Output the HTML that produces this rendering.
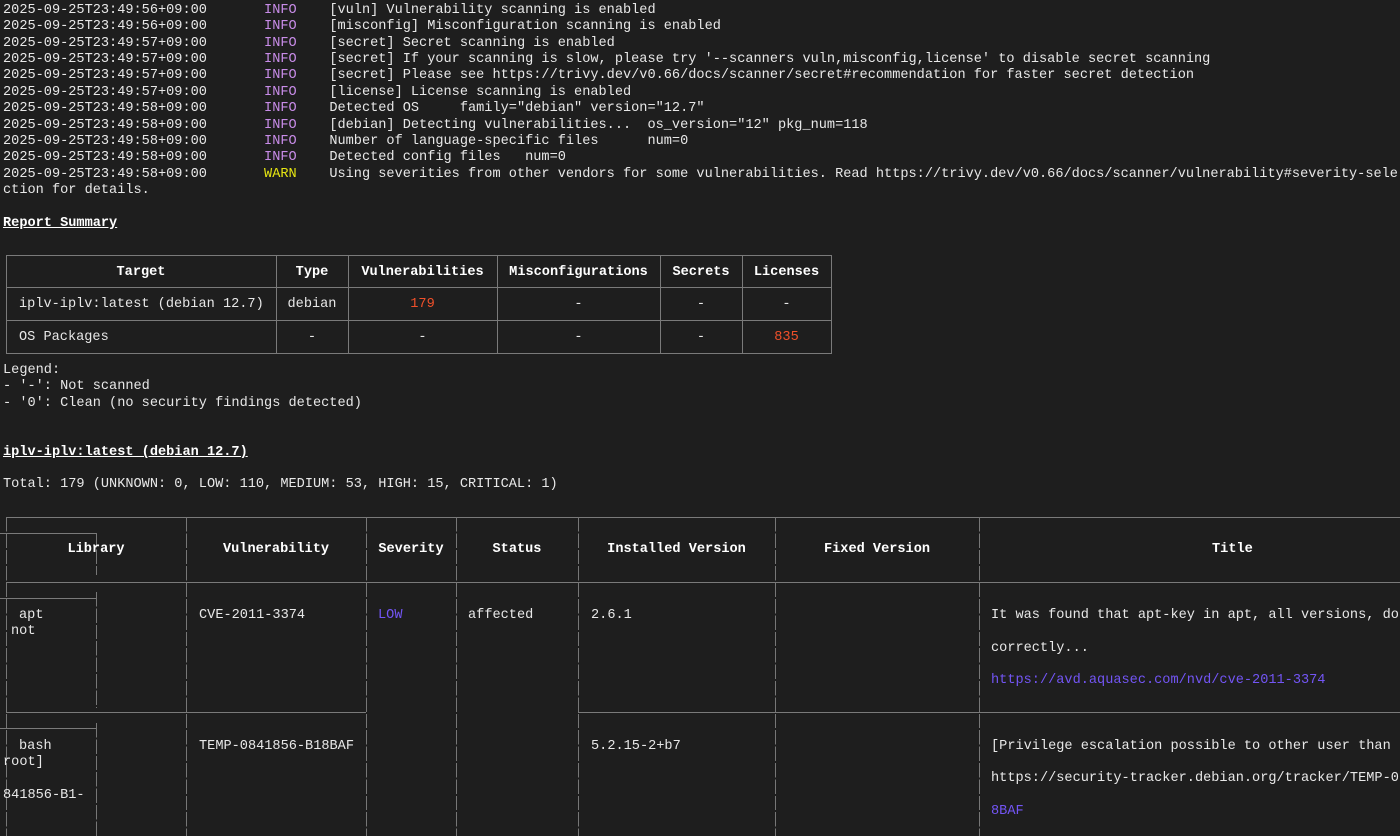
<!DOCTYPE html>
<html><head><meta charset="utf-8"><style>
html,body{margin:0;padding:0;background:#1e1e1e;width:1400px;height:836px;overflow:hidden;position:relative}
.t{position:absolute;font-family:"Liberation Mono",monospace;font-size:13.6px;line-height:16px;height:16px;color:#e8e8e8;white-space:pre;transform:translateY(2px)}
.c{text-align:center}
.b{font-weight:bold;color:#fff}
.u{text-decoration:underline}
.i{color:#c88ce8}.w{color:#e6e612}.r{color:#f0502a}.p{color:#7355f5}
.h{position:absolute;height:1px;background:#7a7a7a}
.v{position:absolute;width:1px;background:#7a7a7a}
.dv{position:absolute;width:1px;background:repeating-linear-gradient(to bottom,#777 0 14.4px,transparent 14.4px 16.4px)}
.s{position:absolute;border:1px solid #7a7a7a}
</style></head><body>
<div class="t" style="left:3px;top:1px">2025-09-25T23:49:56+09:00       <span class="i">INFO</span>    [vuln] Vulnerability scanning is enabled</div>
<div class="t" style="left:3px;top:17px">2025-09-25T23:49:56+09:00       <span class="i">INFO</span>    [misconfig] Misconfiguration scanning is enabled</div>
<div class="t" style="left:3px;top:34px">2025-09-25T23:49:57+09:00       <span class="i">INFO</span>    [secret] Secret scanning is enabled</div>
<div class="t" style="left:3px;top:50px">2025-09-25T23:49:57+09:00       <span class="i">INFO</span>    [secret] If your scanning is slow, please try '--scanners vuln,misconfig,license' to disable secret scanning</div>
<div class="t" style="left:3px;top:66px">2025-09-25T23:49:57+09:00       <span class="i">INFO</span>    [secret] Please see https://trivy.dev/v0.66/docs/scanner/secret#recommendation for faster secret detection</div>
<div class="t" style="left:3px;top:83px">2025-09-25T23:49:57+09:00       <span class="i">INFO</span>    [license] License scanning is enabled</div>
<div class="t" style="left:3px;top:99px">2025-09-25T23:49:58+09:00       <span class="i">INFO</span>    Detected OS     family="debian" version="12.7"</div>
<div class="t" style="left:3px;top:116px">2025-09-25T23:49:58+09:00       <span class="i">INFO</span>    [debian] Detecting vulnerabilities...  os_version="12" pkg_num=118</div>
<div class="t" style="left:3px;top:132px">2025-09-25T23:49:58+09:00       <span class="i">INFO</span>    Number of language-specific files      num=0</div>
<div class="t" style="left:3px;top:148px">2025-09-25T23:49:58+09:00       <span class="i">INFO</span>    Detected config files   num=0</div>
<div class="t" style="left:3px;top:165px">2025-09-25T23:49:58+09:00       <span class="w">WARN</span>    Using severities from other vendors for some vulnerabilities. Read https://trivy.dev/v0.66/docs/scanner/vulnerability#severity-sele</div>
<div class="t" style="left:3px;top:181px">ction for details.</div>
<div class="t b u" style="left:3px;top:214px">Report Summary</div>

<div class="s" style="left:6px;top:255px;width:824px;height:97px"></div>
<div class="h" style="left:6px;top:287px;width:825px"></div>
<div class="h" style="left:6px;top:320px;width:825px"></div>
<div class="v" style="left:276px;top:255px;height:98px"></div>
<div class="v" style="left:348px;top:255px;height:98px"></div>
<div class="v" style="left:497px;top:255px;height:98px"></div>
<div class="v" style="left:660px;top:255px;height:98px"></div>
<div class="v" style="left:742px;top:255px;height:98px"></div>
<div class="t c b" style="left:6px;width:270px;top:263px">Target</div>
<div class="t c b" style="left:276px;width:72px;top:263px">Type</div>
<div class="t c b" style="left:348px;width:149px;top:263px">Vulnerabilities</div>
<div class="t c b" style="left:497px;width:163px;top:263px">Misconfigurations</div>
<div class="t c b" style="left:660px;width:82px;top:263px">Secrets</div>
<div class="t c b" style="left:742px;width:89px;top:263px">Licenses</div>
<div class="t" style="left:19px;top:295px">iplv-iplv:latest (debian 12.7)</div>
<div class="t c" style="left:276px;width:72px;top:295px">debian</div>
<div class="t c r" style="left:348px;width:149px;top:295px">179</div>
<div class="t c" style="left:497px;width:163px;top:295px">-</div>
<div class="t c" style="left:660px;width:82px;top:295px">-</div>
<div class="t c" style="left:742px;width:89px;top:295px">-</div>
<div class="t" style="left:19px;top:328px">OS Packages</div>
<div class="t c" style="left:276px;width:72px;top:328px">-</div>
<div class="t c" style="left:348px;width:149px;top:328px">-</div>
<div class="t c" style="left:497px;width:163px;top:328px">-</div>
<div class="t c" style="left:660px;width:82px;top:328px">-</div>
<div class="t c r" style="left:742px;width:89px;top:328px">835</div>

<div class="t" style="left:3px;top:361px">Legend:</div>
<div class="t" style="left:3px;top:377px">- '-': Not scanned</div>
<div class="t" style="left:3px;top:394px">- '0': Clean (no security findings detected)</div>
<div class="t b u" style="left:3px;top:443px">iplv-iplv:latest (debian 12.7)</div>
<div class="t" style="left:3px;top:475px">Total: 179 (UNKNOWN: 0, LOW: 110, MEDIUM: 53, HIGH: 15, CRITICAL: 1)</div>

<div class="h" style="left:6px;top:517px;width:1394px"></div>
<div class="h" style="left:0;top:533px;width:96px"></div>
<div class="dv" style="left:96px;top:533px;height:42px"></div>
<div class="h" style="left:6px;top:582px;width:1394px"></div>
<div class="h" style="left:0;top:598px;width:96px"></div>
<div class="dv" style="left:96px;top:592px;height:116px"></div>
<div class="h" style="left:6px;top:712px;width:360px"></div>
<div class="h" style="left:578px;top:712px;width:822px"></div>
<div class="h" style="left:0;top:728px;width:96px"></div>
<div class="dv" style="left:96px;top:723px;height:113px"></div>
<div class="dv" style="left:6px;top:517px;height:319px"></div>
<div class="dv" style="left:186px;top:517px;height:319px"></div>
<div class="dv" style="left:366px;top:517px;height:319px"></div>
<div class="dv" style="left:456px;top:517px;height:319px"></div>
<div class="dv" style="left:578px;top:517px;height:319px"></div>
<div class="dv" style="left:775px;top:517px;height:319px"></div>
<div class="dv" style="left:979px;top:517px;height:319px"></div>

<div class="t c b" style="left:6px;width:180px;top:540px">Library</div>
<div class="t c b" style="left:186px;width:180px;top:540px">Vulnerability</div>
<div class="t c b" style="left:366px;width:90px;top:540px">Severity</div>
<div class="t c b" style="left:456px;width:122px;top:540px">Status</div>
<div class="t c b" style="left:578px;width:197px;top:540px">Installed Version</div>
<div class="t c b" style="left:775px;width:204px;top:540px">Fixed Version</div>
<div class="t b" style="left:1212px;top:540px">Title</div>

<div class="t" style="left:19px;top:606px">apt</div>
<div class="t" style="left:11px;top:622px">not</div>
<div class="t" style="left:199px;top:606px">CVE-2011-3374</div>
<div class="t p" style="left:378px;top:606px">LOW</div>
<div class="t" style="left:468px;top:606px">affected</div>
<div class="t" style="left:591px;top:606px">2.6.1</div>
<div class="t" style="left:991px;top:606px">It was found that apt-key in apt, all versions, do</div>
<div class="t" style="left:991px;top:639px">correctly...</div>
<div class="t p" style="left:991px;top:671px">https://avd.aquasec.com/nvd/cve-2011-3374</div>

<div class="t" style="left:19px;top:737px">bash</div>
<div class="t" style="left:3px;top:753px">root]</div>
<div class="t" style="left:3px;top:786px">841856-B1-</div>
<div class="t" style="left:199px;top:737px">TEMP-0841856-B18BAF</div>
<div class="t" style="left:591px;top:737px">5.2.15-2+b7</div>
<div class="t" style="left:991px;top:737px">[Privilege escalation possible to other user than</div>
<div class="t" style="left:991px;top:769px">https://security-tracker.debian.org/tracker/TEMP-0</div>
<div class="t p" style="left:991px;top:802px">8BAF</div>
</body></html>
